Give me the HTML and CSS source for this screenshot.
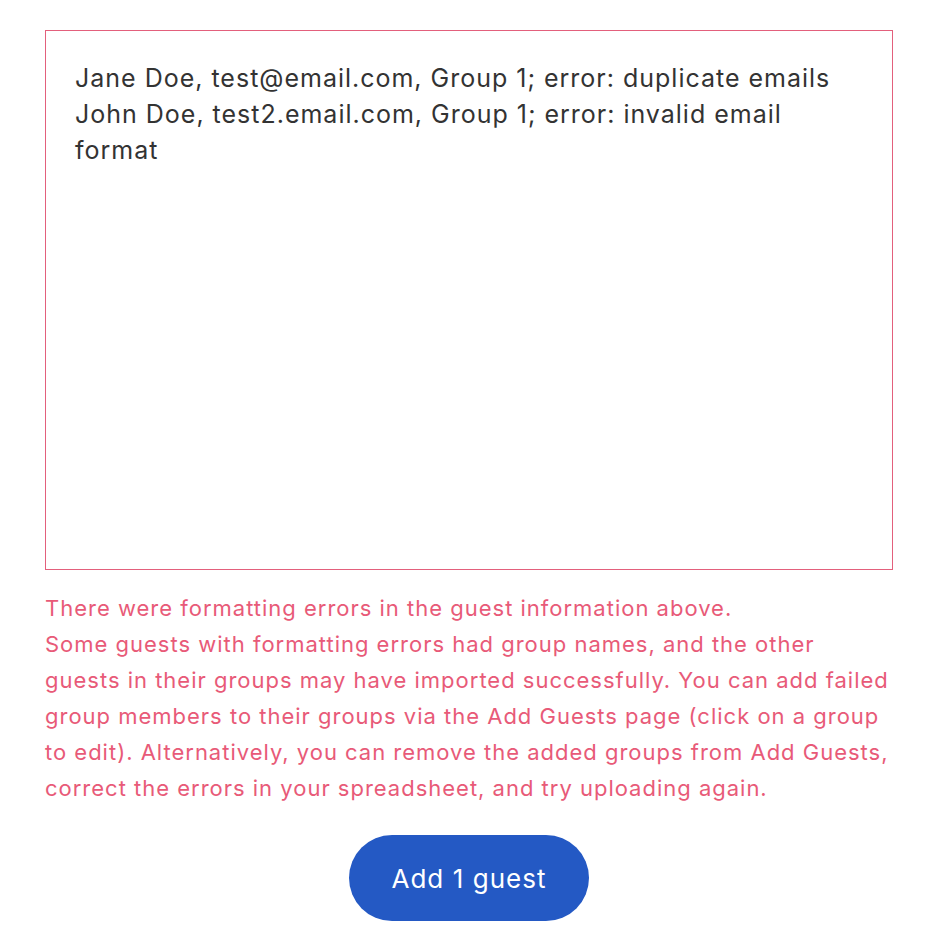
FILE: index.html
```html
<!DOCTYPE html>
<html lang="en">
<head>
  <meta charset="UTF-8">
  <meta name="viewport" content="width=device-width, initial-scale=1.0">
  <title>Import guests</title>
  <link rel="stylesheet" href="styles.css">
</head>
<body>
  <div class="import">
    <textarea class="guest-input" spellcheck="false">Jane Doe, test@email.com, Group 1; error: duplicate emails
John Doe, test2.email.com, Group 1; error: invalid email format</textarea>
    <p class="import-error">There were formatting errors in the guest information above.<br>Some guests with formatting errors had group names, and the other guests in their groups may have imported successfully. You can add failed group members to their groups via the Add Guests page (click on a group to edit). Alternatively, you can remove the added groups from Add Guests, correct the errors in your spreadsheet, and try uploading again.</p>
    <div class="actions">
      <button class="add-button">Add 1 guest</button>
    </div>
  </div>
</body>
</html>
```

FILE: styles.css
```css
body {
  margin: 0;
  font-family: Inter, "Liberation Sans", sans-serif;
  letter-spacing: 0.062em;
  background: #fff;
}
.import {
  width: 848px;
  margin: 30px 0 0 45px;
}
.guest-input {
  display: block;
  box-sizing: border-box;
  width: 848px;
  height: 540px;
  padding: 29px 29px;
  border: 1px solid #e3607c;
  border-radius: 0;
  font-family: inherit;
  font-size: 25px;
  line-height: 36px;
  letter-spacing: inherit;
  color: #333;
  resize: none;
  outline: none;
}
.import-error {
  margin: 20px 0 0;
  font-size: 22px;
  line-height: 36px;
  color: #e85a78;
}
.actions {
  display: flex;
  justify-content: center;
  margin-top: 29px;
}
.add-button {
  width: 240px;
  height: 86px;
  border: none;
  border-radius: 43px;
  background: #2459c4;
  color: #fff;
  font-family: inherit;
  font-size: 26px;
  letter-spacing: 0.04em;
}
```
